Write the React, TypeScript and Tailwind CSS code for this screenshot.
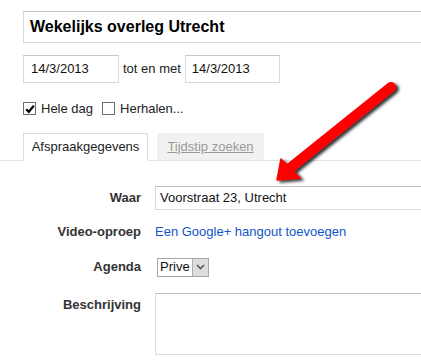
import React from "react";

function Check({ checked }: { checked?: boolean }) {
  return (
    <span className="relative inline-block w-[13px] h-[13px] border border-[#6f6f6f] bg-white shrink-0">
      {checked && (
        <svg className="absolute left-[1px] top-[1px]" width="10" height="10" viewBox="0 0 10 10">
          <path d="M1.2 5.2 L3.8 7.8 L8.8 1.8" fill="none" stroke="#000" strokeWidth="2.2" />
        </svg>
      )}
    </span>
  );
}

export default function App() {
  return (
    <div className="relative w-[421px] h-[363px] bg-white overflow-hidden font-['Liberation_Sans',Arial,sans-serif] text-[13px] text-[#222]">
      <div className="pl-[23px] pt-[11px]">
        <div className="h-[32px] w-[420px] border border-[#d9d9d9] border-t-[#c0c0c0] pl-[6px] flex items-center font-bold text-[16px] text-black">
          Wekelijks overleg Utrecht
        </div>
        <div className="mt-[12px] flex items-center h-[28px]">
          <div className="shrink-0 w-[96px] h-[28px] border border-[#d9d9d9] border-t-[#c6c6c6] pl-[7px] flex items-center text-[#111]">14/3/2013</div>
          <span className="ml-[4px] mr-[4px] text-[#222]">tot en met</span>
          <div className="shrink-0 w-[95px] h-[28px] border border-[#d9d9d9] border-t-[#c6c6c6] pl-[6px] flex items-center text-[#111]">14/3/2013</div>
        </div>
        <div className="mt-[19px] flex items-center h-[13px]">
          <Check checked />
          <span className="ml-[5px] text-[#222]">Hele dag</span>
          <span className="ml-[9px] flex"><Check /></span>
          <span className="ml-[5px] text-[#222]">Herhalen...</span>
        </div>
      </div>
      <div className="mt-[18px] h-[28px] border-b border-[#e3e3e3] flex items-end pl-[23px]">
        <div className="shrink-0 w-[125px] h-[28px] -mb-px border border-[#dcdcdc] border-b-white bg-white flex items-center justify-center text-[#222]">
          Afspraakgegevens
        </div>
        <div className="shrink-0 ml-[9px] w-[107px] h-[27px] bg-[#f1f1f1] flex items-center justify-center text-[#999] underline">
          Tijdstip zoeken
        </div>
      </div>
      <div className="mt-[25px] flex flex-col">
        <div className="flex items-center h-[24px]">
          <div className="shrink-0 w-[141px] text-right font-bold text-[#333]">Waar</div>
          <div className="shrink-0 ml-[14px] w-[280px] h-[24px] border border-[#d9d9d9] border-t-[#c0c0c0] pl-[4px] flex items-center text-[#111]">
            Voorstraat 23, Utrecht
          </div>
        </div>
        <div className="mt-[14px] flex items-center h-[16px]">
          <div className="shrink-0 w-[141px] text-right font-bold text-[#333]">Video-oproep</div>
          <div className="shrink-0 ml-[14px] text-[#1155cc]">Een Google+ hangout toevoegen</div>
        </div>
        <div className="mt-[17px] flex items-center h-[20px]">
          <div className="shrink-0 w-[141px] text-right font-bold text-[#333]">Agenda</div>
          <div className="shrink-0 ml-[16px] h-[19px] flex border border-[#a6a6a6] bg-white">
            <span className="px-[2px] flex items-center text-[#111]">Prive</span>
            <span className="w-[16px] bg-[#dddddd] border-l border-[#b0b0b0] flex items-center justify-center">
              <svg width="9" height="6" viewBox="0 0 9 6">
                <path d="M1 1 L4.5 4.5 L8 1" fill="none" stroke="#555" strokeWidth="1.6" />
              </svg>
            </span>
          </div>
        </div>
        <div className="mt-[16px] flex items-start">
          <div className="shrink-0 w-[141px] text-right font-bold text-[#333] pt-[2px]">Beschrijving</div>
          <div className="shrink-0 ml-[14px] w-[280px] h-[62px] border border-[#dcdcdc] border-t-[#bdbdbd]"></div>
        </div>
      </div>
      <svg className="absolute left-0 top-0 pointer-events-none" width="421" height="363" viewBox="0 0 421 363">
        <defs>
          <filter id="sh" x="-20%" y="-20%" width="140%" height="140%">
            <feGaussianBlur in="SourceAlpha" stdDeviation="1.6" />
            <feOffset dx="3" dy="2" result="b" />
            <feComponentTransfer><feFuncA type="linear" slope="0.8" /></feComponentTransfer>
            <feMerge>
              <feMergeNode />
              <feMergeNode in="SourceGraphic" />
            </feMerge>
          </filter>
        </defs>
        <g filter="url(#sh)">
          <line x1="391" y1="87" x2="290" y2="168" stroke="#ff0000" strokeWidth="10" strokeLinecap="round" />
          <polygon points="277,180 281,159 300,178" fill="#ff0000" stroke="#ff0000" strokeWidth="1.5" strokeLinejoin="round" />
        </g>
      </svg>
    </div>
  );
}
